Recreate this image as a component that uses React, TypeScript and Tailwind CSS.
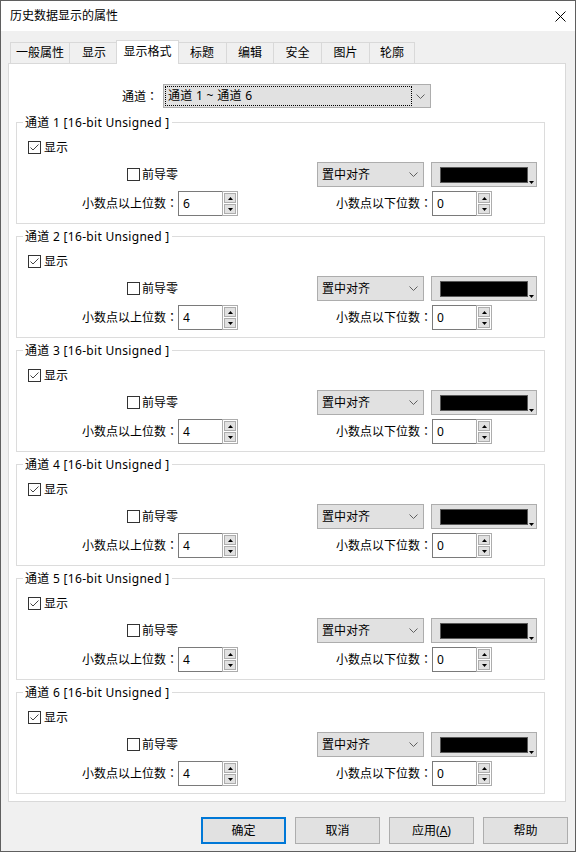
import React from "react";

const tabs = [
  { label: "一般属性", w: "w-[59px]" },
  { label: "显示", w: "w-[49px]" },
  { label: "显示格式", w: "w-[63px]", active: true },
  { label: "标题", w: "w-[49px]" },
  { label: "编辑", w: "w-[47px]" },
  { label: "安全", w: "w-[48px]" },
  { label: "图片", w: "w-[48px]" },
  { label: "轮廓", w: "w-[46px]" },
];

const channels = [
  { n: 1, upper: "6", lower: "0" },
  { n: 2, upper: "4", lower: "0" },
  { n: 3, upper: "4", lower: "0" },
  { n: 4, upper: "4", lower: "0" },
  { n: 5, upper: "4", lower: "0" },
  { n: 6, upper: "4", lower: "0" },
];

// centred full-width colon, as the dialog font draws it
const Colon = () => <span className="font-['Noto_Sans_CJK_TC',sans-serif]">：</span>;

const Chevron = () => (
  <svg width="9" height="5" viewBox="0 0 9 5" className="shrink-0">
    <path d="M0.5 0.5 L4.5 4.5 L8.5 0.5" fill="none" stroke="#606060" strokeWidth="1" />
  </svg>
);

const CheckBox = ({ checked }: { checked?: boolean }) => (
  <div className="w-[13px] h-[13px] border border-[#333333] bg-white flex items-center justify-center shrink-0">
    {checked && (
      <svg width="11" height="11" viewBox="0 0 11 11">
        <path d="M1.5 5.5 L4 8 L9.5 2.5" fill="none" stroke="#444444" strokeWidth="1" />
      </svg>
    )}
  </div>
);

const Spinner = ({ value }: { value: string }) => (
  <div className="flex h-[25px] w-[60px]">
    <div className="w-[44px] h-full border border-r-0 border-[#7a7a7a] bg-white pl-[4px] flex items-center">
      {value}
    </div>
    <div className="w-[16px] h-full border border-[#adadad] bg-white flex flex-col gap-[1px] p-[1px]">
      <div className="flex-1 bg-[#e1e1e1] border border-[#adadad] flex items-center justify-center">
        <svg width="5" height="3" viewBox="0 0 5 3">
          <path d="M2.5 0 L5 3 L0 3 Z" fill="#000" />
        </svg>
      </div>
      <div className="flex-1 bg-[#e1e1e1] border border-[#adadad] flex items-center justify-center">
        <svg width="5" height="3" viewBox="0 0 5 3">
          <path d="M0 0 L5 0 L2.5 3 Z" fill="#000" />
        </svg>
      </div>
    </div>
  </div>
);

const ChannelGroup = ({ n, upper, lower }: { n: number; upper: string; lower: string }) => (
  <div className="relative w-[529px] h-[102px] border border-[#dcdcdc] pt-[18px] pl-[11px] shrink-0">
    <span className="absolute left-[6px] top-[-8px] bg-white px-[2px] leading-[16px] tracking-[0.3px] whitespace-nowrap">
      通道 {n} [16-bit Unsigned ]
    </span>
    <div className="flex items-center gap-[3px] h-[13px]">
      <CheckBox checked />
      <span className="leading-none">显示</span>
    </div>
    <div className="flex items-center h-[25px] mt-[8px]">
      <div className="w-[289px] pl-[99px] flex items-center gap-[2px]">
        <CheckBox />
        <span className="leading-none">前导零</span>
      </div>
      <div className="w-[107px] h-full border border-[#adadad] bg-[#e1e1e1] pl-[4px] pr-[5px] flex items-center justify-between">
        <span>置中对齐</span>
        <Chevron />
      </div>
      <div className="w-[106px] h-full ml-[7px] border border-[#adadad] bg-[#e1e1e1] flex items-start">
        <div className="ml-[8px] mt-[4px] w-[88px] h-[16px] bg-black border border-[#5a5a5a]" />
        <svg width="5" height="3" viewBox="0 0 5 3" className="self-end mb-[2px] ml-[1px]">
          <path d="M0 0 L5 0 L2.5 3 Z" fill="#000" />
        </svg>
      </div>
    </div>
    <div className="flex items-center h-[25px] mt-[4px]">
      <div className="w-[150px] text-right whitespace-nowrap">
        小数点以上位数<Colon />
      </div>
      <Spinner value={upper} />
      <div className="w-[194px] text-right whitespace-nowrap">
        小数点以下位数<Colon />
      </div>
      <Spinner value={lower} />
    </div>
  </div>
);

export default function App() {
  return (
    <div className="w-[576px] h-[852px] bg-[#f0f0f0] border border-[#5f5f5f] text-[12px] text-black font-['Noto_Sans','Noto_Sans_CJK_SC',sans-serif] flex flex-col overflow-hidden">
      <div className="h-[30px] bg-white flex items-center justify-between pl-[9px] pr-[9px] shrink-0">
        <span>历史数据显示的属性</span>
        <svg width="11" height="11" viewBox="0 0 11 11">
          <path d="M0.5 0.5 L10.5 10.5 M10.5 0.5 L0.5 10.5" stroke="#000" strokeWidth="1" />
        </svg>
      </div>

      <div className="pt-[9px] px-[7px] flex flex-col">
        <div className="h-[23px] flex items-end pl-[2px] relative z-10">
          {tabs.map((t, i) =>
            t.active ? (
              <div
                key={i}
                className={`${t.w} h-[24px] -mx-[2px] mb-[-1px] bg-white border border-b-0 border-[#d9d9d9] flex items-start justify-center pt-[2px] relative z-10`}
              >
                {t.label}
              </div>
            ) : (
              <div
                key={i}
                className={`${t.w} h-[21px] border-t border-l ${i === tabs.length - 1 ? "border-r" : ""} border-[#d9d9d9] bg-[#f0f0f0] flex items-center justify-center`}
              >
                {t.label}
              </div>
            )
          )}
        </div>

        <div className="w-[558px] h-[739px] bg-white border border-[#d9d9d9] pt-[20px] px-[7px] flex flex-col">
          <div className="flex items-center h-[24px]">
            <div className="w-[147px] pr-[5px] text-right">
              通道<Colon />
            </div>
            <div className="w-[268px] h-full border border-[#adadad] bg-[#e1e1e1] p-[1px] flex items-center">
              <div className="w-[247px] h-full border border-dotted border-black pl-[2px] flex items-center tracking-[0.3px]">
                通道 1 ~ 通道 6
              </div>
              <div className="flex-1 flex items-center justify-center">
                <Chevron />
              </div>
            </div>
          </div>

          <div className="flex flex-col gap-[12px] mt-[14px]">
            {channels.map((c) => (
              <ChannelGroup key={c.n} n={c.n} upper={c.upper} lower={c.lower} />
            ))}
          </div>
        </div>
      </div>

      <div className="flex justify-end gap-[9px] pr-[7px] mt-[15px]">
        <button className="w-[85px] h-[27px] border-2 border-[#0078d7] bg-[#e1e1e1] flex items-center justify-center">
          确定
        </button>
        <button className="w-[85px] h-[27px] border border-[#adadad] bg-[#e1e1e1] flex items-center justify-center">
          取消
        </button>
        <button className="w-[85px] h-[27px] border border-[#adadad] bg-[#e1e1e1] flex items-center justify-center">
          应用(<span className="underline">A</span>)
        </button>
        <button className="w-[85px] h-[27px] border border-[#adadad] bg-[#e1e1e1] flex items-center justify-center">
          帮助
        </button>
      </div>
    </div>
  );
}
